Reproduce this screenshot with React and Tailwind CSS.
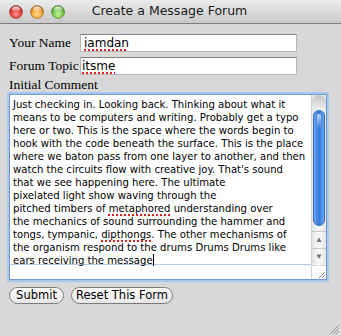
import React from "react";

const lines = [
  "Just checking in. Looking back. Thinking about what it",
  "means to be computers and writing. Probably get a typo",
  "here or two. This is the space where the words begin to",
  "hook with the code beneath the surface. This is the place",
  "where we baton pass from one layer to another, and then",
  "watch the circuits flow with creative joy. That's sound",
  "that we see happening here. The ultimate",
  "pixelated light show waving through the",
  null,
  "the mechanics of sound surrounding the hammer and",
  null,
  "the organism respond to the drums Drums Drums like",
  null,
];

const Misspelled = ({ children }) => (
  <span className="underline decoration-dotted decoration-[#e02020] decoration-2 underline-offset-[2px]">
    {children}
  </span>
);

function Light({ c1, c2, c3 }) {
  const id = "g" + c1.replace("#", "");
  return (
    <svg width="14" height="14" viewBox="0 0 14 14">
      <defs>
        <radialGradient id={id} cx="50%" cy="65%" r="60%">
          <stop offset="0%" stopColor={c1} />
          <stop offset="60%" stopColor={c2} />
          <stop offset="100%" stopColor={c3} />
        </radialGradient>
        <linearGradient id={id + "h"} x1="0" y1="0" x2="0" y2="1">
          <stop offset="0%" stopColor="#fff" stopOpacity="0.9" />
          <stop offset="100%" stopColor="#fff" stopOpacity="0" />
        </linearGradient>
      </defs>
      <circle cx="7" cy="7" r="6.5" fill={`url(#${id})`} stroke={c3} strokeWidth="0.6" />
      <ellipse cx="7" cy="4.2" rx="4" ry="2.6" fill={`url(#${id}h)`} />
    </svg>
  );
}

export default function App() {
  return (
    <div
      className="w-[341px] h-[336px] bg-[#d8d8d8] flex flex-col overflow-hidden relative"
      style={{ fontFamily: "'Liberation Serif', serif" }}
    >
      {/* title bar */}
      <div className="h-[24px] shrink-0 flex items-center border-b border-[#7c7c7c] bg-gradient-to-b from-[#ebebeb] to-[#c9c9c9] relative">
        <div className="flex items-center gap-[7px] pl-[9px]">
          <Light c1="#ff9a96" c2="#e8423c" c3="#9b2a25" />
          <Light c1="#ffe0a0" c2="#f4a53a" c3="#a06a1c" />
          <Light c1="#c8f4a0" c2="#7fc850" c3="#4a8a2a" />
        </div>
        <div
          className="absolute left-0 right-0 top-0 h-[23px] flex items-center justify-center text-[12.5px] text-[#1a1a1a]"
          style={{ fontFamily: "'DejaVu Sans', sans-serif" }}
        >
          <span className="ml-[-2px]">Create a Message Forum</span>
        </div>
      </div>

      {/* form */}
      <div className="flex flex-col pt-[10px] pl-[9px]">
        <div className="flex items-center h-[18px]">
          <div className="w-[71px] text-[13.5px] leading-[18px] text-black whitespace-nowrap">Your Name</div>
          <div className="w-[217px] h-[18px] bg-white border border-[#b5b5b5] border-t-[#808080] flex items-center pl-[3px]">
            <span
              className="text-[12px] text-black leading-[14px]"
              style={{ fontFamily: "'DejaVu Sans', sans-serif" }}
            >
              <Misspelled>iamdan</Misspelled>
            </span>
          </div>
        </div>
        <div className="flex items-center h-[18px] mt-[5px]">
          <div className="w-[71px] text-[13.5px] leading-[18px] text-black whitespace-nowrap">Forum Topic</div>
          <div className="w-[217px] h-[18px] bg-white border border-[#b5b5b5] border-t-[#808080] flex items-center pl-[1px]">
            <span
              className="text-[12px] text-black leading-[14px]"
              style={{ fontFamily: "'DejaVu Sans', sans-serif" }}
            >
              <Misspelled>itsme</Misspelled>
            </span>
          </div>
        </div>
        <div className="text-[13.5px] leading-[16px] mt-[2px] text-black">Initial Comment</div>

        {/* textarea */}
        <div className="w-[318px] h-[186px] mt-[1px] bg-white border border-[#6f9bd0] shadow-[0_0_0_2px_#a9c7ea] flex">
          <div className="flex-1 flex flex-col">
            <div
              className="pt-[3px] pl-[3px] text-[10.1px] leading-[13px] text-black h-[170px] border-b border-[#b4c8e0]"
              style={{ fontFamily: "'DejaVu Sans', sans-serif" }}
            >
              {lines.map((l, i) => {
                if (i === 8)
                  return (
                    <div key={i} className="whitespace-nowrap">
                      pitched timbers of <Misspelled>metaphored</Misspelled> understanding over
                    </div>
                  );
                if (i === 10)
                  return (
                    <div key={i} className="whitespace-nowrap">
                      tongs, tympanic, <Misspelled>dipthongs</Misspelled>. The other mechanisms of
                    </div>
                  );
                if (i === 12)
                  return (
                    <div key={i} className="whitespace-nowrap">
                      ears receiving the message
                      <span className="inline-block w-[1px] h-[12px] bg-black align-[-2px]" />
                    </div>
                  );
                return (
                  <div key={i} className="whitespace-nowrap">
                    {l}
                  </div>
                );
              })}
            </div>
          </div>
          {/* scrollbar */}
          <div className="w-[15px] flex flex-col border-l border-[#d0d0d0] bg-gradient-to-r from-[#e4e4e4] via-[#fafafa] to-[#e4e4e4]">
            <div className="h-[15px] rounded-t-[7px] bg-gradient-to-b from-[#c4c4c4] to-[#f0f0f0]" />
            <div className="h-[116px] mx-[1px] rounded-[7px] bg-gradient-to-r from-[#6aa2e8] via-[#2f79e0] to-[#6aa2e8] border border-[#3d6fb8] relative">
              <div className="absolute left-[3px] right-[3px] top-[3px] h-[14px] rounded-[5px] bg-gradient-to-b from-white/70 to-white/0" />
            </div>
            <div className="flex-1" />
            <div className="h-[17px] flex items-center justify-center text-[8px] text-[#707070] border-t border-[#c8c8c8] leading-none">
              ▲
            </div>
            <div className="h-[17px] flex items-center justify-center text-[8px] text-[#707070] border-t border-[#c8c8c8] leading-none">
              ▼
            </div>
            <div className="h-[14px] bg-white border-t border-[#d8d8d8] flex items-end justify-end">
              <svg width="10" height="10" viewBox="0 0 10 10">
                <path d="M9 3 L3 9 M9 6 L6 9" stroke="#8a8a8a" strokeWidth="1" />
              </svg>
            </div>
          </div>
        </div>

        {/* buttons */}
        <div
          className="flex gap-[7px] mt-[7px]"
          style={{ fontFamily: "'DejaVu Sans', sans-serif" }}
        >
          <div className="w-[55px] h-[17px] rounded-full border border-[#7a7a7a] bg-gradient-to-b from-white to-[#e6e6e6] flex items-center justify-center text-[11.5px] text-black">
            Submit
          </div>
          <div className="w-[102px] h-[17px] rounded-full border border-[#7a7a7a] bg-gradient-to-b from-white to-[#e6e6e6] flex items-center justify-center text-[11.5px] text-black">
            Reset This Form
          </div>
        </div>
      </div>

      {/* window grip */}
      <svg className="absolute right-[1px] bottom-[1px]" width="12" height="12" viewBox="0 0 12 12">
        <path d="M11 2 L2 11 M11 5 L5 11 M11 8 L8 11" stroke="#9a9a9a" strokeWidth="1" />
      </svg>
    </div>
  );
}
